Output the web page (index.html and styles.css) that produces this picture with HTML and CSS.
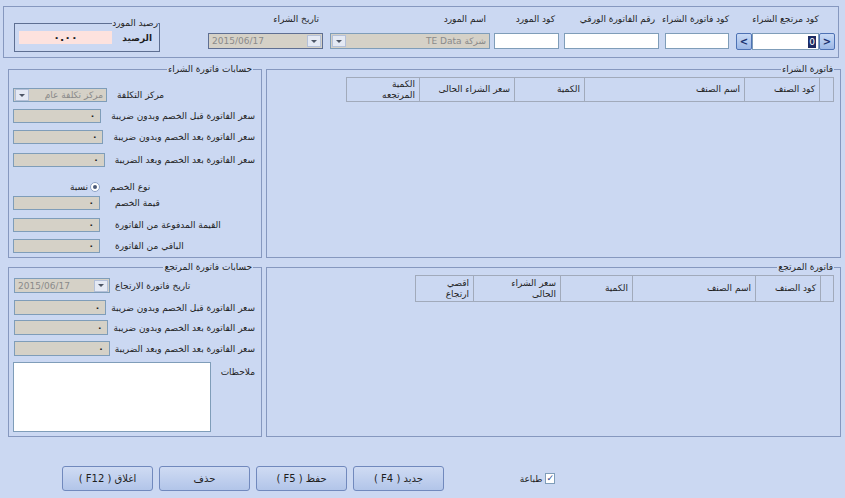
FILE: index.html
```html
<!DOCTYPE html>
<html dir="rtl" lang="ar">
<head>
    <meta charset="UTF-8">
    <title>مرتجع الشراء</title>
    <link rel="stylesheet" href="styles.css">
</head>
<body>
    <div class="top">
        <div class="field f-return">
            <div class="cap center">كود مرتجع الشراء</div>
            <div class="nav">
                <button class="nav-btn">&gt;</button>
                <div class="box code"><span class="sel">0</span></div>
                <button class="nav-btn">&lt;</button>
            </div>
        </div>
        <div class="field f-inv">
            <div class="cap center">كود فاتورة الشراء</div>
            <div class="box"></div>
        </div>
        <div class="field f-paper">
            <div class="cap">رقم الفاتورة الورقي</div>
            <div class="box"></div>
        </div>
        <div class="field f-sup">
            <div class="cap">كود المورد</div>
            <div class="box"></div>
        </div>
        <div class="field f-name">
            <div class="cap">اسم المورد</div>
            <div class="box dis combo">
                <span class="val">شركة TE Data</span>
                <span class="drop"></span>
            </div>
        </div>
        <div class="field f-date">
            <div class="cap">تاريخ الشراء</div>
            <div class="box dis combo ltr dark">
                <span class="val">2015/06/17</span>
                <span class="drop"></span>
            </div>
        </div>
        <fieldset class="bal">
            <legend>رصيد المورد</legend>
            <div class="bal-row">
                <span class="bal-lbl">الرصيد</span>
                <div class="box pink">٠.٠٠</div>
            </div>
        </fieldset>
    </div>

    <div class="row">
        <fieldset class="grp wide mid">
            <legend>فاتورة الشراء</legend>
            <table class="grid">
                <tr>
                    <th class="c-h1"></th>
                    <th class="c-h2">كود الصنف</th>
                    <th class="c-h3">اسم الصنف</th>
                    <th class="c-h4">الكمية</th>
                    <th class="c-h5">سعر الشراء الحالى</th>
                    <th class="c-h6">الكمية<br>المرتجعه</th>
                </tr>
            </table>
        </fieldset>
        <fieldset class="grp side mid">
            <legend>حسابات فاتورة الشراء</legend>
            <div class="frow r1">
                <span class="lbl">مركز التكلفة</span>
                <div class="box dis combo w94">
                    <span class="val">مركز تكلفة عام</span>
                    <span class="drop"></span>
                </div>
            </div>
            <div class="frow r2">
                <span class="lbl">سعر الفاتورة قبل الخصم وبدون ضريبة</span>
                <div class="box dis num w94">٠</div>
            </div>
            <div class="frow r3">
                <span class="lbl">سعر الفاتورة بعد الخصم وبدون ضريبة</span>
                <div class="box dis num w94">٠</div>
            </div>
            <div class="frow r4">
                <span class="lbl">سعر الفاتورة بعد الخصم وبعد الضريبة</span>
                <div class="box dis num w94">٠</div>
            </div>
            <div class="frow r5">
                <span class="lbl">نوع الخصم</span>
                <div class="radio-wrap">
                    <span class="radio"></span>
                    <span>نسبة</span>
                </div>
            </div>
            <div class="frow r6">
                <span class="lbl">قيمة الخصم</span>
                <div class="box dis num w87">٠</div>
            </div>
            <div class="frow r7">
                <span class="lbl">القيمة المدفوعة من الفاتورة</span>
                <div class="box dis num w87">٠</div>
            </div>
            <div class="frow r8">
                <span class="lbl">الباقي من الفاتورة</span>
                <div class="box dis num w87">٠</div>
            </div>
        </fieldset>
    </div>

    <div class="row low">
        <fieldset class="grp wide bot">
            <legend>فاتورة المرتجع</legend>
            <table class="grid">
                <tr>
                    <th class="c-l1"></th>
                    <th class="c-l2">كود الصنف</th>
                    <th class="c-l3">اسم الصنف</th>
                    <th class="c-l4">الكمية</th>
                    <th class="c-l5">سعر الشراء<br>الحالى</th>
                    <th class="c-l6">اقصي<br>ارتجاع</th>
                </tr>
            </table>
        </fieldset>
        <fieldset class="grp side bot">
            <legend>حسابات فاتورة المرتجع</legend>
            <div class="frow q1">
                <span class="lbl">تاريخ فاتورة الارتجاع</span>
                <div class="box dis combo ltr w96">
                    <span class="val">2015/06/17</span>
                    <span class="drop"></span>
                </div>
            </div>
            <div class="frow q2">
                <span class="lbl">سعر الفاتورة قبل الخصم وبدون ضريبة</span>
                <div class="box dis num w96">٠</div>
            </div>
            <div class="frow q3">
                <span class="lbl">سعر الفاتورة بعد الخصم وبدون ضريبة</span>
                <div class="box dis num w96">٠</div>
            </div>
            <div class="frow q4">
                <span class="lbl">سعر الفاتورة بعد الخصم وبعد الضريبة</span>
                <div class="box dis num w96">٠</div>
            </div>
            <div class="notes-row">
                <span class="notes-lbl">ملاحظات</span>
                <div class="box notes"></div>
            </div>
        </fieldset>
    </div>

    <div class="actions">
        <label class="check">
            <span class="check-box">✓</span>
            <span>طباعة</span>
        </label>
        <div class="buttons">
            <button class="btn">جديد ( F4 )</button>
            <button class="btn">حفظ ( F5 )</button>
            <button class="btn">حذف</button>
            <button class="btn">اغلاق ( F12 )</button>
        </div>
    </div>
</body>
</html>
```

FILE: styles.css
```css
* {
    box-sizing: border-box;
}

body {
    margin: 0;
    width: 845px;
    height: 498px;
    overflow: hidden;
    background: #cbd8f2;
    font-family: "DejaVu Sans", sans-serif;
    font-size: 9px;
    color: #1e1e1e;
}

/* top strip */
.top {
    margin: 6px 6px 0 3px;
    height: 52px;
    border: 1px solid #8698bf;
    display: flex;
    align-items: flex-start;
    padding: 6px 3px 0 10px;
}

.field {
    display: flex;
    flex-direction: column;
}

.cap {
    height: 13px;
    line-height: 13px;
    white-space: nowrap;
    text-align: right;
    padding-right: 4px;
    margin-bottom: 7px;
}

.cap.center {
    text-align: center;
    padding-right: 0;
}

.f-return { width: 99px; margin-left: 7px; }
.f-inv { width: 64px; margin-left: 6px; }
.f-paper { width: 95px; margin-left: 5px; }
.f-sup { width: 65px; margin-left: 4px; }
.f-name { width: 160px; margin-left: 7px; }
.f-date { width: 115px; }

.box {
    height: 16px;
    border: 1px solid #7f9db9;
    background: #fff;
    display: flex;
    align-items: center;
    padding: 0 3px;
    white-space: nowrap;
    overflow: hidden;
}

.box.dis {
    background: #d5d1c7;
    color: #8a8a8a;
}

.box.num {
    color: #222;
    font-weight: bold;
    padding-right: 5px;
}

.box.dark {
    border-color: #5f6f92;
}

.combo {
    padding: 0 1px 0 1px;
}

.combo .val {
    flex: 1;
    padding: 0 2px;
}

.ltr {
    direction: ltr;
}

.drop {
    width: 14px;
    height: 12px;
    border: 1px solid #b4c0d8;
    background: #e4e9f4;
    display: flex;
    align-items: center;
    justify-content: center;
}

.drop::after {
    content: "";
    border-left: 3px solid transparent;
    border-right: 3px solid transparent;
    border-top: 3px solid #4d5666;
}

.nav {
    display: flex;
    height: 17px;
}

.nav-btn {
    direction: ltr;
    width: 16px;
    height: 17px;
    padding: 0;
    border: 1px solid #4e72b4;
    border-radius: 2px;
    background: linear-gradient(#c9daf6, #9db8e6);
    font-family: "DejaVu Sans", sans-serif;
    font-size: 10px;
    font-weight: bold;
    color: #1b3170;
}

.nav .code {
    flex: 1;
    height: 17px;
    padding: 0 2px;
}

.sel {
    background: #1d2b63;
    color: #fff;
    line-height: 12px;
    padding: 0 1px;
}

/* supplier balance */
.bal {
    margin: 4px 0 0 0;
    margin-right: auto;
    width: 146px;
    height: 35px;
    border: 1px solid #5e6f92;
    padding: 0 1px 0 4px;
}

.bal legend {
    padding: 0;
    line-height: 12px;
}

.bal-row {
    display: flex;
    align-items: center;
    padding-top: 2px;
}

.bal-lbl {
    font-weight: bold;
    padding-right: 6px;
}

.box.pink {
    margin-right: auto;
    width: 93px;
    height: 13px;
    border: none;
    background: #fde2de;
    justify-content: center;
    font-size: 11px;
    font-weight: bold;
}

/* group boxes */
.row {
    display: flex;
    gap: 4px;
    padding: 0 4px 0 8px;
    margin-top: 5px;
}

.row.low {
    margin-top: 3px;
}

.grp {
    margin: 0;
    border: 1px solid #8698bf;
    padding: 0 6px 0 4px;
    min-width: 0;
}

.grp legend {
    padding: 0 1px;
    line-height: 12px;
}

.grp.wide { width: 575px; }
.grp.side { width: 254px; }
.grp.mid { height: 195px; }
.grp.bot { height: 176px; }

.side legend {
    margin-right: 2px;
}

.grid {
    border-collapse: collapse;
    margin-top: 2px;
}

.grid th {
    height: 24px;
    border: 1px solid #a1aabb;
    font-weight: normal;
    text-align: right;
    vertical-align: middle;
    padding: 0 4px;
    line-height: 11px;
}

.bot .grid th {
    height: 26px;
}

.c-h1 { width: 14px; }
.c-h2 { width: 75px; }
.c-h3 { width: 160px; }
.c-h4 { width: 70px; }
.c-h5 { width: 95px; }
.c-h6 { width: 73px; }

.c-l1 { width: 13px; }
.c-l2 { width: 65px; }
.c-l3 { width: 123px; }
.c-l4 { width: 72px; }
.c-l5 { width: 87px; }
.c-l6 { width: 58px; }

/* form rows */
.frow {
    display: flex;
    align-items: center;
    height: 14px;
}

.lbl {
    flex: 1;
    text-align: left;
    white-space: nowrap;
    padding-left: 10px;
}

.w94 { width: 94px; height: 14px; }
.w87 { width: 87px; height: 14px; }
.w96 { width: 96px; height: 15px; }

.r1 { margin-top: 13px; }
.r2 { margin-top: 7px; }
.r3 { margin-top: 7px; }
.r4 { margin-top: 9px; }
.r5 { margin-top: 14px; height: 12px; }
.r6 { margin-top: 3px; }
.r7 { margin-top: 8px; }
.r8 { margin-top: 7px; }

.r6 .lbl, .r7 .lbl, .r8 .lbl {
    padding-left: 15px;
}

.radio-wrap {
    width: 87px;
    display: flex;
    align-items: center;
    gap: 2px;
}

.radio {
    width: 10px;
    height: 10px;
    border: 1px solid #8ea3c6;
    border-radius: 50%;
    background: #fff;
    display: flex;
    align-items: center;
    justify-content: center;
}

.radio::after {
    content: "";
    width: 4px;
    height: 4px;
    border-radius: 50%;
    background: #4c5a78;
}

.bot .frow {
    height: 15px;
}

.bot .lbl {
    padding-left: 5px;
}

.bot.side {
    padding-left: 5px;
}

.q1 { margin-top: 5px; }
.q2 { margin-top: 7px; }
.q3 { margin-top: 5px; }
.q4 { margin-top: 6px; }

.notes-row {
    display: flex;
    margin-top: 6px;
    margin-left: -1px;
}

.notes-lbl {
    flex: 1;
    padding-top: 4px;
    line-height: 12px;
}

.box.notes {
    width: 198px;
    height: 70px;
}

/* bottom buttons */
.actions {
    display: flex;
    align-items: center;
    margin-top: 29px;
    padding-right: 290px;
    height: 25px;
}

.check {
    width: 35px;
    display: flex;
    align-items: center;
    gap: 3px;
}

.check-box {
    width: 11px;
    height: 11px;
    border: 1px solid #7f9db9;
    background: #fff;
    color: #2a4a8a;
    font-size: 9px;
    line-height: 9px;
    text-align: center;
}

.buttons {
    display: flex;
    gap: 6px;
    margin-right: 76px;
}

.btn {
    width: 91px;
    height: 25px;
    border: 1px solid #7189bd;
    border-radius: 3px;
    background: linear-gradient(#cfdbf3, #b2c5e9);
    font-family: "DejaVu Sans", sans-serif;
    font-size: 10px;
    color: #1e1e1e;
    padding: 0;
}
```
